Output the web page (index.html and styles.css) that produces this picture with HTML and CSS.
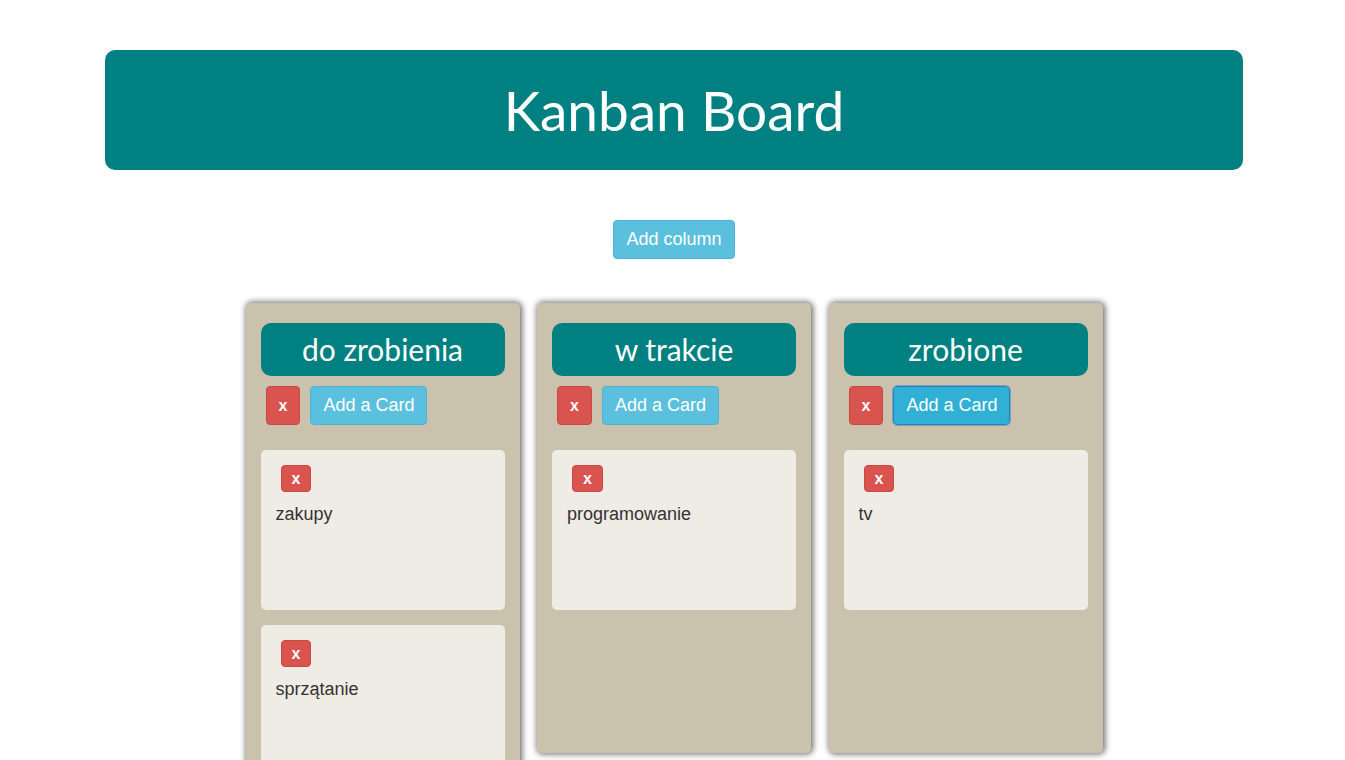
FILE: index.html
```html
<!DOCTYPE html>
<html lang="pl">
<head>
  <meta charset="utf-8">
  <meta name="viewport" content="width=device-width, initial-scale=1">
  <title>Kanban Board</title>
  <link rel="stylesheet" href="styles.css">
</head>
<body>
  <header class="banner">
    <h1 class="banner-title">Kanban Board</h1>
  </header>
  <main class="board">
    <button type="button" class="btn btn-info">Add column</button>
    <div class="columns">
      <section class="column">
        <h2 class="column-title">do zrobienia</h2>
        <div class="column-actions">
          <button type="button" class="btn btn-danger">x</button>
          <button type="button" class="btn btn-info">Add a Card</button>
        </div>
        <ul class="card-list">
          <li class="card">
            <button type="button" class="btn btn-danger btn-small">x</button>
            <p class="card-text">zakupy</p>
          </li>
          <li class="card">
            <button type="button" class="btn btn-danger btn-small">x</button>
            <p class="card-text">sprzątanie</p>
          </li>
        </ul>
      </section>
      <section class="column">
        <h2 class="column-title">w trakcie</h2>
        <div class="column-actions">
          <button type="button" class="btn btn-danger">x</button>
          <button type="button" class="btn btn-info">Add a Card</button>
        </div>
        <ul class="card-list">
          <li class="card">
            <button type="button" class="btn btn-danger btn-small">x</button>
            <p class="card-text">programowanie</p>
          </li>
        </ul>
      </section>
      <section class="column">
        <h2 class="column-title">zrobione</h2>
        <div class="column-actions">
          <button type="button" class="btn btn-danger">x</button>
          <button type="button" class="btn btn-info btn-active">Add a Card</button>
        </div>
        <ul class="card-list">
          <li class="card">
            <button type="button" class="btn btn-danger btn-small">x</button>
            <p class="card-text">tv</p>
          </li>
        </ul>
      </section>
    </div>
  </main>
</body>
</html>
```
FILE: styles.css
```css
* {
  box-sizing: border-box;
}

html {
  overflow-x: hidden;
  scrollbar-width: none;
}

body {
  margin: 0;
  padding: 50px 0 50px 3px;
  background: #fff;
  color: #333;
  font-family: "Liberation Sans", Arial, sans-serif;
  font-size: 18px;
  line-height: 24px;
}

.banner {
  max-width: 1138px;
  margin: 0 auto 50px;
  padding: 27px 20px;
  border-radius: 10px;
  background: #008080;
  text-align: center;
}

.banner-title {
  margin: 0;
  color: #fff;
  font-family: Lato, sans-serif;
  font-size: 55px;
  font-weight: 400;
  line-height: 66px;
}

.board {
  display: flex;
  flex-direction: column;
  align-items: center;
  gap: 44px;
}

.columns {
  display: flex;
  flex-wrap: wrap;
  align-items: flex-start;
  justify-content: space-between;
  width: 100%;
  max-width: 857px;
}

.column {
  width: 274px;
  min-height: 450px;
  padding: 20px 15px 15px;
  border-radius: 5px;
  background: #cac2ad;
  box-shadow: 1px 0 6px 1px #666;
}

.column-title {
  margin: 0 0 10px;
  padding: 9px 0 10px;
  border-radius: 10px;
  background: #008080;
  color: #fff;
  font-family: Lato, sans-serif;
  font-size: 30px;
  font-weight: 400;
  line-height: 34px;
  text-align: center;
}

.column-actions {
  display: flex;
  gap: 10px;
  margin: 0 5px 25px;
}

.btn {
  padding: 6px 12px 7px;
  border: 1px solid transparent;
  border-radius: 4px;
  color: #fff;
  font-family: inherit;
  font-size: 18px;
  line-height: 24px;
  cursor: pointer;
}

.btn-info {
  border-color: #4eb4d4;
  background: #5bc0de;
}

.btn-active {
  border-color: #2a80b5;
  outline: 1px solid #7da2c9;
  background: #31b0d5;
}

.btn-danger {
  padding: 7px 12px 6px;
  border-color: #cb4743;
  background: #d9534f;
  font-size: 16px;
  font-weight: 700;
}

.btn-small {
  margin-left: 5px;
  padding: 3px 10px 2px;
  line-height: 20px;
}

.card-list {
  display: grid;
  gap: 15px;
  margin: 0;
  padding: 0;
  list-style: none;
}

.card {
  display: flex;
  flex-direction: column;
  align-items: flex-start;
  gap: 10px;
  min-height: 160px;
  padding: 15px;
  border-radius: 5px;
  background: #efece5;
}

.card-text {
  margin: 0;
}
```
